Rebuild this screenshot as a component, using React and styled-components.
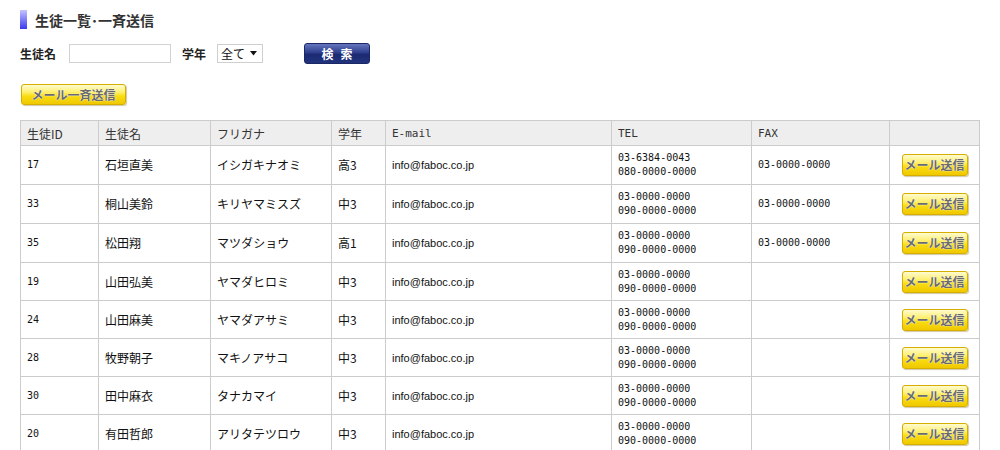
import React from "react";
import styled, { createGlobalStyle } from "styled-components";

const GlobalStyle = createGlobalStyle`
  body {
    margin: 0;
    background: #fff;
    color: #222;
    font-family: "Noto Sans CJK JP", "Liberation Sans", sans-serif;
  }
`;

const Page = styled.div`
  padding: 10px 20px 0 20px;
`;

const Title = styled.h1`
  display: flex;
  align-items: center;
  gap: 8px;
  margin: 0;
  height: 19px;
  font-size: 14px;
  font-weight: bold;
  color: #333;
  &::before {
    content: "";
    width: 7px;
    height: 19px;
    background: linear-gradient(#c4c4ff, #3a3aee);
  }
`;

const SearchRow = styled.div`
  display: flex;
  align-items: center;
  margin-top: 14px;
  height: 21px;
`;

const Label = styled.span`
  font-size: 12px;
  font-weight: bold;
  color: #222;
  margin-right: ${(p) => p.gap || 10}px;
`;

const TextInput = styled.input`
  box-sizing: border-box;
  width: 102px;
  height: 19px;
  border: 1px solid #d2d2d2;
  margin: 0 11px 0 0;
  padding: 0 3px;
`;

const SelectBox = styled.div`
  box-sizing: border-box;
  display: flex;
  align-items: center;
  justify-content: space-between;
  width: 46px;
  height: 19px;
  padding: 0 4px 0 3px;
  border: 1px solid #cfcfcf;
  font-size: 12px;
  color: #111;
  margin-right: 41px;
`;

const SearchButton = styled.button`
  box-sizing: border-box;
  width: 66px;
  height: 21px;
  border: 1px solid #1c2766;
  border-radius: 3px;
  background: linear-gradient(#6576bd 0%, #2f3f8e 45%, #1b2a72 55%, #22337d 100%);
  color: #fff;
  font-family: "Noto Sans CJK JP", sans-serif;
  font-size: 12px;
  font-weight: bold;
  letter-spacing: 7px;
  padding: 0 0 0 7px;
  line-height: 19px;
`;

const YellowButton = styled.button`
  box-sizing: border-box;
  width: ${(p) => p.w}px;
  height: ${(p) => p.h}px;
  border: 1px solid #d6ae00;
  border-radius: 3px;
  background: linear-gradient(#fffbd0 0%, #fff176 35%, #f8dc10 60%, #f0c800 100%);
  box-shadow: 1px 1px 1px rgba(120, 100, 0, 0.35);
  color: #6a6a6a;
  font-family: "Noto Sans CJK JP", sans-serif;
  font-size: 12px;
  font-weight: bold;
  line-height: ${(p) => p.h - 2}px;
  padding: 0;
  text-shadow: 0 0 1px #fff, 0 0 1px #fff;
  white-space: nowrap;
`;

const ActionRow = styled.div`
  display: flex;
  margin-top: 20px;
  padding-left: 1px;
`;

const Table = styled.table`
  margin-top: 15px;
  width: 960px;
  border-collapse: collapse;
  table-layout: fixed;
`;

const Th = styled.th`
  height: 24px;
  padding: 0 6px;
  border: 1px solid #cccccc;
  background: #eeeeee;
  text-align: left;
  font-weight: normal;
  color: #333;
  font-size: ${(p) => (p.mono ? 11 : 12)}px;
  font-family: ${(p) =>
    p.mono
      ? '"DejaVu Sans Mono", "Noto Sans CJK JP", monospace'
      : '"Noto Sans CJK JP", sans-serif'};
`;

const Row = styled.tr`
  height: ${(p) => (p.tall ? 39 : 38)}px;
`;

const Td = styled.td`
  padding: 0 6px;
  border: 1px solid #cccccc;
  color: #111;
  line-height: 14px;
  text-align: ${(p) => (p.center ? "center" : "left")};
  font-size: ${(p) => (p.mono ? 10 : p.latin ? 11 : 12)}px;
  font-family: ${(p) =>
    p.mono
      ? '"DejaVu Sans Mono", monospace'
      : p.latin
      ? '"Liberation Sans", sans-serif'
      : '"Noto Sans CJK JP", sans-serif'};
`;

const Caret = () => (
  <svg width="8" height="5" viewBox="0 0 8 5">
    <path d="M0 0 H7 L3.5 4.5 Z" fill="#111" />
  </svg>
);

const widths = [78, 112, 121, 54, 226, 140, 138, 90];

const students = [
  { id: 17, name: "石垣直美", kana: "イシガキナオミ", grade: "高3", tel: ["03-6384-0043", "080-0000-0000"], fax: "03-0000-0000" },
  { id: 33, name: "桐山美鈴", kana: "キリヤマミスズ", grade: "中3", tel: ["03-0000-0000", "090-0000-0000"], fax: "03-0000-0000" },
  { id: 35, name: "松田翔", kana: "マツダショウ", grade: "高1", tel: ["03-0000-0000", "090-0000-0000"], fax: "03-0000-0000" },
  { id: 19, name: "山田弘美", kana: "ヤマダヒロミ", grade: "中3", tel: ["03-0000-0000", "090-0000-0000"], fax: "" },
  { id: 24, name: "山田麻美", kana: "ヤマダアサミ", grade: "中3", tel: ["03-0000-0000", "090-0000-0000"], fax: "" },
  { id: 28, name: "牧野朝子", kana: "マキノアサコ", grade: "中3", tel: ["03-0000-0000", "090-0000-0000"], fax: "" },
  { id: 30, name: "田中麻衣", kana: "タナカマイ", grade: "中3", tel: ["03-0000-0000", "090-0000-0000"], fax: "" },
  { id: 20, name: "有田哲郎", kana: "アリタテツロウ", grade: "中3", tel: ["03-0000-0000", "090-0000-0000"], fax: "" },
];

const App = () => {
  return (
    <Page>
      <GlobalStyle />
      <Title>生徒一覧･一斉送信</Title>
      <SearchRow>
        <Label gap={13}>生徒名</Label>
        <TextInput type="text" />
        <Label gap={11}>学年</Label>
        <SelectBox>
          全て <Caret />
        </SelectBox>
        <SearchButton>検索</SearchButton>
      </SearchRow>
      <ActionRow>
        <YellowButton w={105} h={21}>メール一斉送信</YellowButton>
      </ActionRow>
      <Table>
        <colgroup>
          {widths.map((w, i) => (
            <col key={i} style={{ width: w }} />
          ))}
        </colgroup>
        <thead>
          <tr>
            <Th>生徒ID</Th>
            <Th>生徒名</Th>
            <Th>フリガナ</Th>
            <Th>学年</Th>
            <Th mono>E-mail</Th>
            <Th mono>TEL</Th>
            <Th mono>FAX</Th>
            <Th />
          </tr>
        </thead>
        <tbody>
          {students.map((s) => (
            <Row key={s.id} tall={s.fax !== ""}>
              <Td mono>{s.id}</Td>
              <Td>{s.name}</Td>
              <Td>{s.kana}</Td>
              <Td>{s.grade}</Td>
              <Td latin>info@faboc.co.jp</Td>
              <Td mono>
                {s.tel[0]}
                <br />
                {s.tel[1]}
              </Td>
              <Td mono>{s.fax}</Td>
              <Td center>
                <YellowButton w={66} h={22}>メール送信</YellowButton>
              </Td>
            </Row>
          ))}
        </tbody>
      </Table>
    </Page>
  );
};

export default App;
